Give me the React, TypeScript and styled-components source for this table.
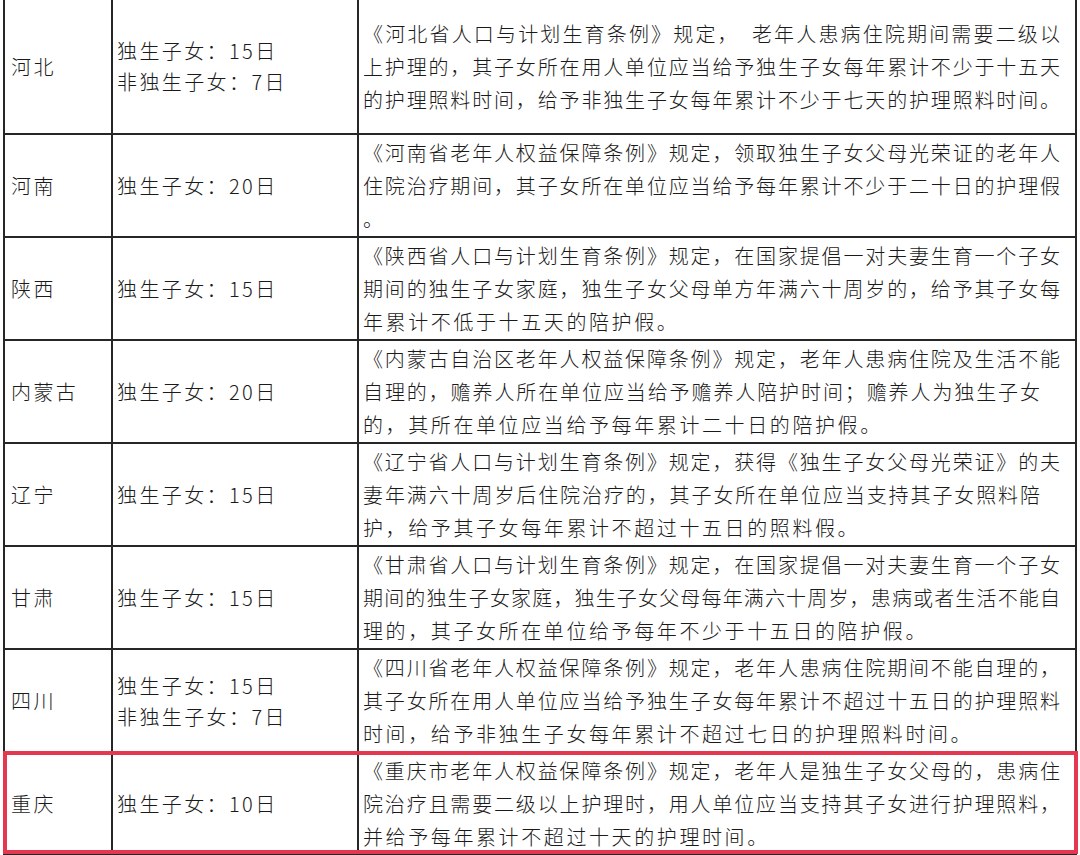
import React from 'react';
import styled, { createGlobalStyle, css } from 'styled-components';

type Fill = 'full' | 'partial';

interface ILine {
  text: string;
  fill?: Fill;
}

interface IRow {
  province: string;
  quota: string[];
  rule: ILine[];
  height: number;
  highlight?: boolean;
}

const GlobalStyle = createGlobalStyle`
  html, body {
    margin: 0;
    padding: 0;
    background: #ffffff;
    overflow: hidden;
  }

  body {
    font-family: "Noto Sans CJK SC", "Noto Sans", sans-serif;
    font-weight: 300;
    color: #1a1a1a;
  }
`;

const Page = styled.div`
  width: 1080px;
  height: 855px;
  overflow: hidden;
`;

const Sheet = styled.div`
  margin: -3px 0 0 3px;
  width: 1074px;
  border-left: 2px solid #262626;
  border-top: 2px solid #262626;
`;

const Row = styled.div<{ $height: number; $highlight?: boolean }>`
  display: grid;
  grid-template-columns: 108px 246px 718px;
  height: ${(props): number => props.$height}px;
  position: relative;

  ${(props) =>
    props.$highlight &&
    css`
      &::after {
        content: '';
        position: absolute;
        top: -2px;
        left: -2px;
        right: 1px;
        bottom: 2px;
        border: 4px solid #e3384f;
        pointer-events: none;
      }
    `}
`;

const Cell = styled.div`
  display: flex;
  flex-direction: column;
  justify-content: center;
  border-right: 2px solid #262626;
  border-bottom: 2px solid #262626;
  box-sizing: border-box;
  font-size: 20px;
  min-width: 0;
`;

const ProvinceCell = styled(Cell)`
  padding: 0 0 0 6px;
  line-height: 33px;
  letter-spacing: 2.4px;
`;

const QuotaCell = styled(Cell)`
  padding: 0 0 0 4px;
  line-height: 31px;
  letter-spacing: 2.4px;
`;

const RuleCell = styled(Cell)`
  padding: 0 15px 0 4px;
  line-height: 33px;
`;

const Line = styled.div<{ $fill?: Fill }>`
  white-space: nowrap;
  letter-spacing: 2.6px;

  ${(props) =>
    props.$fill &&
    css`
      white-space: normal;
      letter-spacing: 0;
      text-align: justify;
      text-align-last: justify;
      margin-right: ${props.$fill === 'partial' ? 20 : 0}px;
    `}
`;

const rows: IRow[] = [
  {
    province: '河北',
    quota: ['独生子女：15日', '非独生子女：7日'],
    height: 136,
    rule: [
      { text: '《河北省人口与计划生育条例》规定，　老年人患病住院期间需要二级以', fill: 'full' },
      { text: '上护理的，其子女所在用人单位应当给予独生子女每年累计不少于十五天', fill: 'full' },
      { text: '的护理照料时间，给予非独生子女每年累计不少于七天的护理照料时间。', fill: 'full' },
    ],
  },
  {
    province: '河南',
    quota: ['独生子女：20日'],
    height: 103,
    rule: [
      { text: '《河南省老年人权益保障条例》规定，领取独生子女父母光荣证的老年人', fill: 'full' },
      { text: '住院治疗期间，其子女所在单位应当给予每年累计不少于二十日的护理假', fill: 'full' },
      { text: '。' },
    ],
  },
  {
    province: '陕西',
    quota: ['独生子女：15日'],
    height: 103,
    rule: [
      { text: '《陕西省人口与计划生育条例》规定，在国家提倡一对夫妻生育一个子女', fill: 'full' },
      { text: '期间的独生子女家庭，独生子女父母单方年满六十周岁的，给予其子女每', fill: 'full' },
      { text: '年累计不低于十五天的陪护假。' },
    ],
  },
  {
    province: '内蒙古',
    quota: ['独生子女：20日'],
    height: 103,
    rule: [
      { text: '《内蒙古自治区老年人权益保障条例》规定，老年人患病住院及生活不能', fill: 'full' },
      { text: '自理的，赡养人所在单位应当给予赡养人陪护时间；赡养人为独生子女', fill: 'partial' },
      { text: '的，其所在单位应当给予每年累计二十日的陪护假。' },
    ],
  },
  {
    province: '辽宁',
    quota: ['独生子女：15日'],
    height: 103,
    rule: [
      { text: '《辽宁省人口与计划生育条例》规定，获得《独生子女父母光荣证》的夫', fill: 'full' },
      { text: '妻年满六十周岁后住院治疗的，其子女所在单位应当支持其子女照料陪', fill: 'partial' },
      { text: '护，给予其子女每年累计不超过十五日的照料假。' },
    ],
  },
  {
    province: '甘肃',
    quota: ['独生子女：15日'],
    height: 103,
    rule: [
      { text: '《甘肃省人口与计划生育条例》规定，在国家提倡一对夫妻生育一个子女', fill: 'full' },
      { text: '期间的独生子女家庭，独生子女父母每年满六十周岁，患病或者生活不能自', fill: 'full' },
      { text: '理的，其子女所在单位给予每年不少于十五日的陪护假。' },
    ],
  },
  {
    province: '四川',
    quota: ['独生子女：15日', '非独生子女：7日'],
    height: 103,
    rule: [
      { text: '《四川省老年人权益保障条例》规定，老年人患病住院期间不能自理的，', fill: 'full' },
      { text: '其子女所在用人单位应当给予独生子女每年累计不超过十五日的护理照料', fill: 'full' },
      { text: '时间，给予非独生子女每年累计不超过七日的护理照料时间。' },
    ],
  },
  {
    province: '重庆',
    quota: ['独生子女：10日'],
    height: 103,
    highlight: true,
    rule: [
      { text: '《重庆市老年人权益保障条例》规定，老年人是独生子女父母的，患病住', fill: 'full' },
      { text: '院治疗且需要二级以上护理时，用人单位应当支持其子女进行护理照料，', fill: 'full' },
      { text: '并给予每年累计不超过十天的护理时间。' },
    ],
  },
];

function App(): JSX.Element {
  return (
    <Page>
      <GlobalStyle />
      <Sheet>
        {rows.map((row) => (
          <Row key={row.province} $height={row.height} $highlight={row.highlight}>
            <ProvinceCell>{row.province}</ProvinceCell>
            <QuotaCell>
              {row.quota.map((q) => (
                <div key={q}>{q}</div>
              ))}
            </QuotaCell>
            <RuleCell>
              {row.rule.map((line) => (
                <Line key={line.text} $fill={line.fill}>
                  {line.text}
                </Line>
              ))}
            </RuleCell>
          </Row>
        ))}
      </Sheet>
    </Page>
  );
}

export default App;
